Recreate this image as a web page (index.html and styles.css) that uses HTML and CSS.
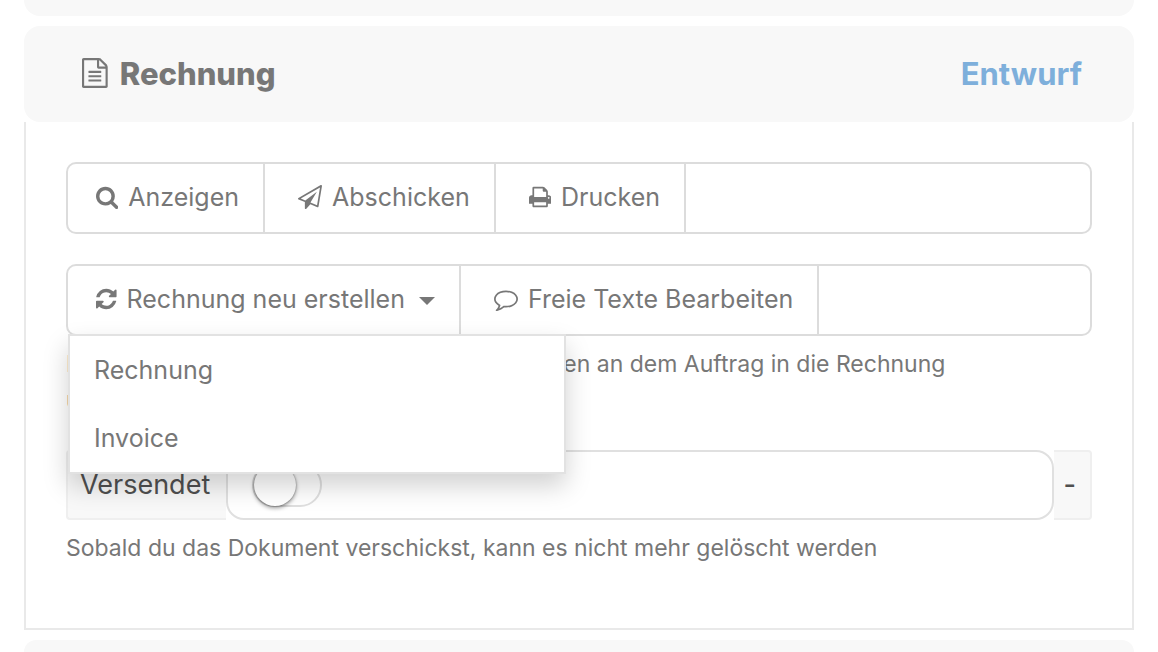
FILE: index.html
```html
<!DOCTYPE html>
<html lang="de">
<head>
    <meta charset="UTF-8">
    <meta name="viewport" content="width=device-width, initial-scale=1.0">
    <title>Rechnung</title>
    <link rel="stylesheet" href="styles.css">
</head>
<body>

    <div class="panel-edge panel-edge-top"></div>

    <section class="panel">
        <header class="panel-header">
            <h2 class="panel-title">
                <svg class="icon-title" viewBox="128 0 1536 1792" aria-hidden="true"><path d="M1596 380q28 28 48 76t20 88v1152q0 40-28 68t-68 28h-1344q-40 0-68-28t-28-68v-1600q0-40 28-68t68-28h896q40 0 88 20t76 48zm-444-244v376h376q-10-29-22-41l-313-313q-12-12-41-22zm384 1528v-1024h-416q-40 0-68-28t-28-68v-416h-768v1536h1280zm-1024-864q0-14 9-23t23-9h704q14 0 23 9t9 23v64q0 14-9 23t-23 9h-704q-14 0-23-9t-9-23v-64zm736 224q14 0 23 9t9 23v64q0 14-9 23t-23 9h-704q-14 0-23-9t-9-23v-64q0-14 9-23t23-9h704zm0 256q14 0 23 9t9 23v64q0 14-9 23t-23 9h-704q-14 0-23-9t-9-23v-64q0-14 9-23t23-9h704z"/></svg>
                Rechnung
            </h2>
            <span class="panel-status">Entwurf</span>
        </header>

        <div class="panel-body">
            <div class="toolbar">
                <button type="button" class="toolbar-btn">
                    <svg class="icon" viewBox="0 0 1664 1792" aria-hidden="true"><path d="M1152 832q0-185-131.5-316.5t-316.5-131.5-316.5 131.5-131.5 316.5 131.5 316.5 316.5 131.5 316.5-131.5 131.5-316.5zm512 832q0 52-38 90t-90 38q-54 0-90-38l-343-342q-179 124-399 124-143 0-273.5-55.5t-225-150-150-225-55.5-273.5 55.5-273.5 150-225 225-150 273.5-55.5 273.5 55.5 225 150 150 225 55.5 273.5q0 220-124 399l343 343q37 37 37 90z"/></svg>
                    Anzeigen
                </button>
                <button type="button" class="toolbar-btn">
                    <svg class="icon" viewBox="0 0 1792 1792" aria-hidden="true"><path d="M1764 11q33 24 27 64l-256 1536q-5 29-32 45-14 8-31 8-11 0-24-5l-527-215-298 327q-18 21-47 21-14 0-23-4-19-7-30-23.5t-11-36.5v-452l-472-193q-37-14-40-55-3-39 32-59l1664-960q35-21 68 2zm-342 1499l221-1323-1434 827 336 137 863-639-478 797z"/></svg>
                    Abschicken
                </button>
                <button type="button" class="toolbar-btn">
                    <svg class="icon" viewBox="64 0 1664 1792" aria-hidden="true"><path d="M448 1536h896v-256h-896v256zm0-640h896v-384h-160q-40 0-68-28t-28-68v-160h-640v640zm1152 64q0-26-19-45t-45-19-45 19-19 45 19 45 45 19 45-19 19-45zm128 0v416q0 13-9.5 22.5t-22.5 9.5h-224v160q0 40-28 68t-68 28h-960q-40 0-68-28t-28-68v-160h-224q-13 0-22.5-9.5t-9.5-22.5v-416q0-79 56.5-135.5t135.5-56.5h64v-544q0-40 28-68t68-28h672q40 0 88 20t76 48l152 152q28 28 48 76t20 88v256h64q79 0 135.5 56.5t56.5 135.5z"/></svg>
                    Drucken
                </button>
            </div>

            <div class="toolbar">
                <button type="button" class="toolbar-btn" aria-haspopup="true" aria-expanded="true">
                    <svg class="icon" viewBox="128 0 1536 1792" aria-hidden="true"><path d="M1639 1056q0 5-1 7-64 268-268 434.5t-478 166.5q-146 0-282.5-55t-243.5-157l-129 129q-19 19-45 19t-45-19-19-45v-448q0-26 19-45t45-19h448q26 0 45 19t19 45-19 45l-137 137q71 66 161 102t187 36q134 0 250-65t186-179q11-17 53-117 8-23 30-23h192q13 0 22.5 9.5t9.5 22.5zm25-800v448q0 26-19 45t-45 19h-448q-26 0-45-19t-19-45 19-45l138-138q-148-137-349-137-134 0-250 65t-186 179q-11 17-53 117-8 23-30 23h-199q-13 0-22.5-9.5t-9.5-22.5v-7q65-268 270-434.5t480-166.5q146 0 284 55.5t245 156.5l130-129q19-19 45-19t45 19 19 45z"/></svg>
                    Rechnung neu erstellen
                    <span class="caret"></span>
                </button>
                <button type="button" class="toolbar-btn">
                    <svg class="icon" viewBox="0 0 1792 1792" aria-hidden="true"><path d="M896 384q-204 0-381.5 69.5t-282 187.5-104.5 255q0 112 71.5 213.5t201.5 175.5l87 50-27 96q-24 91-70 172 152-63 275-171l43-38 57 6q69 8 130 8 204 0 381.5-69.5t282-187.5 104.5-255-104.5-255-282-187.5-381.5-69.5zm896 512q0 174-120 321.5t-326 233-450 85.5q-70 0-145-8-198 175-460 242-49 14-114 22h-5q-15 0-27-10.5t-16-27.5v-1q-3-4-.5-12t2-10 4.5-9.5l6-9 7-8.5 8-9q7-8 31-34.5t34.5-38 31-39.5 32.5-51 27-59 26-76q-157-89-247.5-220t-90.5-281q0-174 120-321.5t326-233 450-85.5 450 85.5 326 233 120 321.5z"/></svg>
                    Freie Texte Bearbeiten
                </button>
                <div class="dropdown-menu">
                    <a href="#" class="dropdown-item">Rechnung</a>
                    <a href="#" class="dropdown-item">Invoice</a>
                </div>
            </div>
            <p class="help-text">Hiermit werden die bisher erfolgten Änderungen an dem Auftrag in die Rechnung<br>und Invoice übernommen</p>

            <div class="input-group">
                <label class="input-addon" for="versendet">Versendet</label>
                <div class="input-field">
                    <input type="checkbox" class="switch" id="versendet">
                </div>
                <span class="input-addon input-addon-end">-</span>
            </div>
            <p class="help-text">Sobald du das Dokument verschickst, kann es nicht mehr gelöscht werden</p>
        </div>
    </section>

    <div class="panel-edge panel-edge-bottom"></div>

</body>
</html>
```
FILE: styles.css
```css
* {
    margin: 0;
    padding: 0;
    box-sizing: border-box;
}

body {
    font-family: Inter, sans-serif;
    font-size: 25px;
    color: #777;
    background: #fff;
    padding: 0 24px;
}

/* neighbouring panels, only their edge is visible */
.panel-edge {
    background: #f8f8f8;
}

.panel-edge-top {
    height: 16px;
    border-radius: 0 0 16px 16px;
}

.panel-edge-bottom {
    height: 12px;
    border-radius: 16px 16px 0 0;
}

.panel {
    margin: 10px 0;
}

.panel-header {
    display: flex;
    justify-content: space-between;
    align-items: center;
    height: 96px;
    padding: 0 52px 2px 58px;
    background: #f8f8f8;
    border-radius: 16px;
    font-size: 31px;
    font-weight: 700;
}

.panel-title {
    display: flex;
    align-items: center;
    gap: 12px;
    font-size: 31px;
    font-weight: 800;
}

.panel-status {
    color: #7eafdb;
}

.panel-body {
    padding: 40px 40px 30px;
    border: 2px solid #e9e9e9;
    border-top: none;
}

.icon,
.icon-title {
    height: 24px;
    fill: currentColor;
}

.icon-title {
    height: 30px;
}

.toolbar {
    position: relative;
    display: flex;
    height: 72px;
    border: 2px solid #dcdcdc;
    border-radius: 10px;
}

.toolbar + .toolbar {
    margin-top: 30px;
}

.toolbar-btn {
    display: flex;
    align-items: center;
    gap: 10px;
    padding: 0 24px 2px 28px;
    background: none;
    border: none;
    border-right: 2px solid #dcdcdc;
    color: #777;
    font-family: inherit;
    font-size: 25px;
    cursor: pointer;
}

.toolbar-btn + .toolbar-btn {
    padding-left: 33px;
}

.caret {
    margin: 4px 0 0 4px;
    border: 8px solid transparent;
    border-top-color: currentColor;
    border-bottom: none;
}

.dropdown-menu {
    position: absolute;
    top: 100%;
    left: 0;
    width: 498px;
    background: #fff;
    border: 2px solid #e2e2e2;
    box-shadow: 0 12px 24px rgba(0, 0, 0, 0.18);
    z-index: 10;
}

.dropdown-item {
    display: block;
    padding: 0 24px;
    line-height: 68px;
    color: #777;
    text-decoration: none;
}

.help-text {
    margin: 10px 0 32px;
    font-size: 23px;
    line-height: 36px;
}

.input-group {
    display: flex;
    height: 70px;
}

.input-addon {
    display: flex;
    align-items: center;
    padding: 0 16px 2px 12px;
    background: #f8f8f8;
    border: 2px solid #efefef;
    border-right: none;
    border-radius: 4px 0 0 4px;
    color: #505050;
    font-size: 27px;
}

.input-addon-end {
    padding: 0 14px 2px 10px;
    border-right: 2px solid #efefef;
    border-left: none;
    border-radius: 0 4px 4px 0;
    font-weight: 500;
}

.input-field {
    flex: 1;
    display: flex;
    align-items: center;
    padding: 0 24px;
    border: 2px solid #e0e0e0;
    border-radius: 18px;
}

.switch {
    appearance: none;
    width: 70px;
    height: 44px;
    border: 2px solid #dfdfdf;
    border-radius: 22px;
    background: #fff;
    cursor: pointer;
}

.switch::before {
    content: "";
    display: block;
    width: 42px;
    height: 42px;
    margin-top: -1px;
    border-radius: 50%;
    background: #fff;
    box-shadow: 0 2px 4px rgba(0, 0, 0, 0.4), 0 0 2px rgba(0, 0, 0, 0.4);
}

.switch:checked::before {
    margin-left: 26px;
}
```
